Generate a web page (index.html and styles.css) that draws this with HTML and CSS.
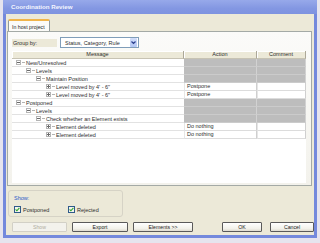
FILE: index.html
```html
<!DOCTYPE html>
<html lang="en">
  <head>
    <meta charset="UTF-8" />
    <link rel="stylesheet" href="styles.css">
    <title>Coordination Review</title>
  </head>
  <body>
    <div class="window">
      <div class="titlebar">Coordination Review</div>
      <div class="client">
        <div class="tabs"><div class="tab">In host project</div></div>
        <div class="panel">
          <div class="groupby">
            <span class="label">Group by:</span>
            <div class="combo">
              <span class="value">Status, Category, Rule</span>
              <span class="drop">
                <svg width="7" height="9" viewBox="0 0 7 9"><path d="M1.5 3.5 L3.5 5.5 L5.5 3.5" fill="none" stroke="#2a3f8f" stroke-width="1.2"/></svg>
              </span>
            </div>
          </div>
          <div class="grid">
            <div class="rows">
              <div class="head">Message</div><div class="head">Action</div><div class="head">Comment</div>

              <div class="msg l0"><i class="tw minus"></i><i class="dash"></i>New/Unresolved</div><div class="off"></div><div class="off"></div>
              <div class="msg l1"><i class="tw minus"></i><i class="dash"></i>Levels</div><div class="off"></div><div class="off"></div>
              <div class="msg l2"><i class="tw minus"></i><i class="dash"></i>Maintain Position</div><div class="off"></div><div class="off"></div>
              <div class="msg l3"><i class="tw plus"></i><i class="dash"></i>Level moved by 4' - 6"</div><div class="cell">Postpone</div><div class="cell"></div>
              <div class="msg l3"><i class="tw plus"></i><i class="dash"></i>Level moved by 4' - 6"</div><div class="cell">Postpone</div><div class="cell"></div>
              <div class="msg l0"><i class="tw minus"></i><i class="dash"></i>Postponed</div><div class="off"></div><div class="off"></div>
              <div class="msg l1"><i class="tw minus"></i><i class="dash"></i>Levels</div><div class="off"></div><div class="off"></div>
              <div class="msg l2"><i class="tw minus"></i><i class="dash"></i>Check whether an Element exists</div><div class="off"></div><div class="off"></div>
              <div class="msg l3"><i class="tw plus"></i><i class="dash"></i>Element deleted</div><div class="cell">Do nothing</div><div class="cell"></div>
              <div class="msg l3"><i class="tw plus"></i><i class="dash"></i>Element deleted</div><div class="cell">Do nothing</div><div class="cell"></div>
            </div>
          </div>
        </div>

        <div class="showbox">
          <div class="showlabel">Show:</div>
          <div class="checks">
            <label class="check">
              <svg width="7" height="7" viewBox="0 0 7 7"><rect x="0.5" y="0.5" width="6" height="6" fill="#f4f4ee" stroke="#2f5a8a"/><path d="M1.6 3.4 L2.9 4.8 L5.4 1.9" fill="none" stroke="#2aa62a" stroke-width="1.1"/></svg>
              Postponed
            </label>
            <label class="check">
              <svg width="7" height="7" viewBox="0 0 7 7"><rect x="0.5" y="0.5" width="6" height="6" fill="#f4f4ee" stroke="#2f5a8a"/><path d="M1.6 3.4 L2.9 4.8 L5.4 1.9" fill="none" stroke="#2aa62a" stroke-width="1.1"/></svg>
              Rejected
            </label>
          </div>
        </div>

        <div class="buttons">
          <button class="btn show" disabled>Show</button>
          <button class="btn export">Export</button>
          <button class="btn elements">Elements &gt;&gt;</button>
          <span class="spacer"></span>
          <button class="btn ok">OK</button>
          <button class="btn cancel">Cancel</button>
        </div>
      </div>
    </div>
  </body>
</html>
```

FILE: styles.css
```css
* {
  margin: 0;
  padding: 0;
  box-sizing: border-box;
}

body {
  width: 320px;
  height: 243px;
  overflow: hidden;
  background: #e6e4ee;
  font-family: "Liberation Sans", Arial, sans-serif;
  font-size: 5.5px;
  color: #2e2e2e;
}

.window {
  margin-left: 3px;
  width: 314px;
  height: 238px;
  display: flex;
  flex-direction: column;
  padding: 0 3px 3px;
  background: #7489dc;
  border-radius: 0 4px 0 0;
}

.titlebar {
  height: 14px;
  margin: 0 -3px;
  padding: 3px 0 0 8px;
  font-size: 6.2px;
  font-weight: bold;
  color: #f4f6ff;
  background: linear-gradient(#97a9ea, #8397e2 60%, #7e93e0);
}

.client {
  flex: 1;
  display: flex;
  flex-direction: column;
  background: #ece9d8;
}

.tabs {
  display: flex;
  margin-top: 5px;
  padding-left: 2px;
}

.tab {
  width: 42px;
  height: 12px;
  padding: 3px 0 0 3px;
  background: #fbfbf8;
  border: 1px solid #919b9c;
  border-bottom: none;
  border-top: 2px solid #f0b44a;
  border-radius: 2px 2px 0 0;
  font-size: 5.2px;
  color: #1e1e1e;
}

.panel {
  height: 155px;
  margin: 0 2px 0 1px;
  padding: 5px 0 0 4px;
  border: 1px solid #a4aaa6;
  background: linear-gradient(#fbfbf9, #f3f2ec);
}

.groupby {
  display: flex;
  align-items: center;
  gap: 3px;
  height: 11px;
  margin-bottom: 3px;
}

.label {
  width: 45px;
  height: 8px;
  line-height: 8px;
  padding-left: 1px;
  background: #ece9d8;
}

.combo {
  display: flex;
  align-items: center;
  justify-content: space-between;
  width: 79px;
  height: 11px;
  padding: 0 1px 0 4px;
  background: #fff;
  border: 1px solid #7f9db9;
}

.drop {
  display: flex;
  width: 7px;
  height: 9px;
  background: linear-gradient(#d2defa, #b2c6f4);
  border-radius: 1px;
}

.grid {
  width: 294px;
  height: 132px;
  background: #fff;
}

.rows {
  display: grid;
  grid-template-columns: 172px 73px 49px;
  grid-auto-rows: 8px;
}

.head {
  text-align: center;
  line-height: 7px;
  background: #ece9d8;
  border-right: 1px solid #aca899;
  border-bottom: 1px solid #c7c3b3;
  box-shadow: inset 1px 1px 0 #fff;
}

.msg {
  display: flex;
  align-items: center;
  white-space: nowrap;
  border-bottom: 1px solid #e2e2e2;
}

.l0 { padding-left: 4px; }
.l1 { padding-left: 14px; }
.l2 { padding-left: 24px; }
.l3 { padding-left: 34px; }

.tw {
  display: inline-block;
  width: 5px;
  height: 5px;
  border: 1px solid #b4b4b4;
  background: linear-gradient(#6a6a6a, #6a6a6a) center / 3px 1px no-repeat, #fff;
}

.tw.plus {
  background: linear-gradient(#6a6a6a, #6a6a6a) center / 3px 1px no-repeat,
    linear-gradient(#6a6a6a, #6a6a6a) center / 1px 3px no-repeat, #fff;
}

.dash {
  display: inline-block;
  width: 3px;
  height: 1px;
  margin: 0 1px;
  background: #b4b4b4;
}

.off {
  background: #bdbdbd;
  border-bottom: 1px solid #cbcbcb;
  border-right: 1px solid #d2d2d2;
}

.cell {
  padding-left: 2px;
  line-height: 7px;
  border-bottom: 1px solid #dcdcdc;
  border-right: 1px solid #cfcfcf;
  border-left: 1px solid #e6e6e6;
}

.showbox {
  width: 115px;
  height: 27px;
  margin: 4px 0 0 2px;
  padding: 4px 0 0 5px;
  border: 1px solid #d6d3c6;
  border-radius: 3px;
}

.showlabel {
  color: #2a58c8;
  height: 8px;
}

.checks {
  display: flex;
  margin-top: 3px;
}

.check {
  display: flex;
  align-items: center;
  gap: 2px;
  width: 57px;
}

.buttons {
  display: flex;
  margin-top: 5px;
  padding-left: 6px;
  gap: 5px;
}

.btn {
  height: 10px;
  font-family: inherit;
  font-size: 5.2px;
  color: #222;
  background: linear-gradient(#ffffff, #f2f1ea 70%, #dedbcf);
  border: 1px solid #5a5a5a;
  border-radius: 1px;
}

.btn.show {
  width: 55px;
  color: #b0ad9e;
  background: #f3f2ec;
  border-color: #d2d0c6;
}

.btn.export { width: 56px; }
.btn.elements { width: 60px; }
.btn.ok { width: 40px; margin-right: 3px; }
.btn.cancel { width: 44px; }

.spacer {
  flex: 1;
}
```
